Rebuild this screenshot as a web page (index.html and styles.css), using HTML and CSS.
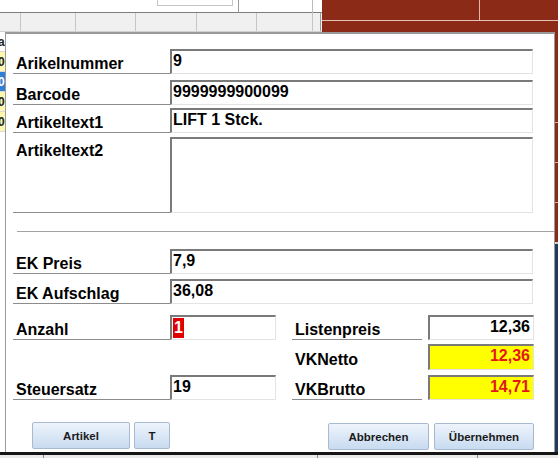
FILE: index.html
```html
<!DOCTYPE html>
<html>
<head>
<meta charset="utf-8">
<link rel="stylesheet" href="styles.css">
</head>
<body>
<div class="app">
  <div class="main">
    <div class="leftpane">
      <div class="topbar"><span class="tbbox"></span><span class="tbbox2"></span></div>
      <div class="header">
        <span class="hc hc1"></span><span class="hc hc2"></span><span class="hc hc3"></span><span class="hc hc4"></span><span class="hc hc5"></span><span class="hc hc6"></span><span class="hc hc7"></span>
      </div>
      <div class="list">
        <div class="li">a</div>
        <div class="li yel">0</div>
        <div class="li sel">0</div>
        <div class="li yel">0</div>
        <div class="li yel">0</div>
      </div>
    </div>
    <div class="rightpane">
      <div class="red">
        <div class="rtop"><span class="rcell"></span></div>
        <div class="rgap"></div>
        <div class="rrow"></div>
        <div class="rrow"></div>
        <div class="rrow"></div>
      </div>
      <div class="blue"></div>
    </div>
  </div>
  <div class="blackline"></div>
  <div class="footer"><span class="fc fc1"></span><span class="fc fc2"></span><span class="fc fc3"></span></div>

  <div class="dialog">
    <div class="field r1">
      <div class="lbl">Arikelnummer</div>
      <div class="inp wide">9</div>
    </div>
    <div class="field r2">
      <div class="lbl">Barcode</div>
      <div class="inp wide">9999999900099</div>
    </div>
    <div class="field r3">
      <div class="lbl">Artikeltext1</div>
      <div class="inp wide">LIFT 1 Stck.</div>
    </div>
    <div class="field r4 tall">
      <div class="lbl top">Artikeltext2</div>
      <div class="inp wide"></div>
    </div>
    <div class="sep"></div>
    <div class="field r5">
      <div class="lbl">EK Preis</div>
      <div class="inp wide">7,9</div>
    </div>
    <div class="field r6">
      <div class="lbl">EK Aufschlag</div>
      <div class="inp wide">36,08</div>
    </div>
    <div class="field r7">
      <div class="lbl">Anzahl</div>
      <div class="inp narrow"><span class="selected">1</span></div>
      <div class="rlbl">Listenpreis</div>
      <div class="inp val">12,36</div>
    </div>
    <div class="field r8">
      <div class="spacer-left"></div>
      <div class="rlbl noline">VKNetto</div>
      <div class="inp val yellow">12,36</div>
    </div>
    <div class="field r9">
      <div class="lbl">Steuersatz</div>
      <div class="inp narrow">19</div>
      <div class="rlbl">VKBrutto</div>
      <div class="inp val yellow">14,71</div>
    </div>
    <div class="buttons">
      <button class="btn b-artikel">Artikel</button>
      <button class="btn b-t">T</button>
      <span class="grow"></span>
      <button class="btn b-abbr">Abbrechen</button>
      <button class="btn b-ueb">Übernehmen</button>
    </div>
  </div>
</div>
</body>
</html>
```
FILE: styles.css
```css
* { box-sizing: border-box; }
html, body { margin: 0; padding: 0; }
body { font-family: "Liberation Sans", Arial, sans-serif; background: #fff; }

.app {
  position: relative;
  width: 558px;
  height: 458px;
  overflow: hidden;
  display: grid;
  grid-template-rows: 452px 3px 3px;
}

.main { display: grid; grid-template-columns: 322px 1fr; }

.leftpane { background: #fff; display: flex; flex-direction: column; }
.topbar {
  height: 13px;
  border-bottom: 1px solid #7d7d7d;
  display: flex;
  background: #fff;
}
.tbbox { margin-left: 157px; width: 76px; height: 6px; border: 1px solid #c4c4c4; border-top: none; }
.tbbox2 { margin-left: 5px; width: 75px; height: 13px; border-left: 1px solid #9a9a9a; border-right: 1px solid #bbb; }
.header {
  height: 19px;
  background: #f0f0f0;
  display: flex;
  border-bottom: 1px solid #d0d0d0;
}
.hc { height: 100%; border-right: 1px solid #c6c6c6; }
.hc1 { width: 21px; }
.hc2 { width: 55px; }
.hc3 { width: 60px; }
.hc4 { width: 61px; }
.hc5 { width: 60px; }
.hc6 { width: 56px; }
.hc7 { width: 8px; border-right: 1px solid #9a9a9a; }

.list { display: flex; flex-direction: column; }
.li {
  height: 20px;
  width: 40px;
  font: bold 12px/20px "Liberation Sans", Arial, sans-serif;
  color: #222;
  padding-left: 0;
  text-indent: -2px;
  border-bottom: 1px solid #d8d8d8;
}
.li.yel { background: #fdf7b0; }
.li.sel { background: #2f7fd6; color: #fff; }

.rightpane { display: grid; grid-template-rows: 242px 1fr; }
.red { background: #8b2a17; display: flex; flex-direction: column; }
.rtop { height: 21px; border-bottom: 1px solid #e6c3b8; display: flex; }
.rcell { width: 158px; height: 100%; border-right: 1px solid #e0b7aa; }
.rgap { height: 101px; }
.rrow { height: 40px; border-top: 1px solid #d9a999; }
.blue { background: #1f3b5d; border-top: 2px solid #c9d3de; }

.blackline { background: #151515; }
.footer { background: #e9e9e9; display: flex; }
.fc { height: 100%; border-right: 1px solid #8a8a8a; }
.fc1 { width: 44px; }
.fc2 { width: 274px; }
.fc3 { width: 160px; }

/* Dialog window */
.dialog {
  position: absolute;
  left: 5px;
  top: 32px;
  width: 550px;
  height: 420px;
  background: #fff;
  border: 1px solid #9a9a9a;
  border-top: 2px solid #9a9a9a;
  border-bottom: none;
  padding: 15px 0 0 7px;
  display: flex;
  flex-direction: column;
}

.field { display: flex; height: 25px; flex: none; }
.r2 { margin-top: 6px; }
.r3 { margin-top: 3px; }
.r4 { margin-top: 4px; }
.tall { height: 76px; }
.r5 { margin-top: 17px; }
.r6 { margin-top: 5px; }
.r7 { margin-top: 11px; }
.r8 { margin-top: 4px; height: 26px; }
.r9 { margin-top: 5px; }

.lbl {
  width: 157px;
  border-bottom: 1px solid #8c8c8c;
  padding-left: 3px;
  display: flex;
  align-items: flex-end;
  font: bold 16px/18px "Liberation Sans", Arial, sans-serif;
  color: #000;
}
.lbl.top { align-items: flex-start; padding-top: 5px; }

.inp {
  border-top: 2px solid #7a7a7a;
  border-left: 2px solid #7a7a7a;
  border-right: 1px solid #e3e3e3;
  border-bottom: 1px solid #e3e3e3;
  padding-left: 1px;
  padding-top: 1px;
  font: bold 16px/18px "Liberation Sans", Arial, sans-serif;
  color: #000;
  background: #fff;
}
.wide { width: 363px; }
.narrow { width: 106px; }

.selected {
  display: inline-block;
  background: #e10000;
  color: #fff;
  line-height: 20px;
  height: 20px;
  padding: 0 1px;
  vertical-align: top;
  margin-top: 0;
}

.spacer-left { width: 263px; }
.rlbl {
  width: 130px;
  margin-left: 16px;
  margin-right: 6px;
  border-bottom: 1px solid #8c8c8c;
  padding-left: 3px;
  display: flex;
  align-items: flex-end;
  font: bold 16px/18px "Liberation Sans", Arial, sans-serif;
  color: #000;
}
.rlbl.noline { border-bottom-color: transparent; }
.val {
  width: 106px;
  text-align: right;
  padding-right: 3px;
  padding-left: 0;
}
.yellow { background: #ffff00; color: #e4161a; }

.sep {
  height: 1px;
  background: #a3a3a3;
  margin: 18px 0 0 4px;
  flex: none;
}

.buttons {
  display: flex;
  margin-top: 22px;
  padding-left: 19px;
  padding-right: 20px;
  height: 27px;
}
.grow { flex: 1; }
.btn {
  height: 27px;
  border: 1px solid #a8bad0;
  border-radius: 2px;
  background: linear-gradient(#eef4fc, #c8dbf0);
  font: bold 11.5px "Liberation Sans", Arial, sans-serif;
  color: #1b1b1b;
  padding: 0;
  margin: 0;
}
.b-artikel { width: 98px; }
.b-t { width: 36px; margin-left: 4px; }
.b-abbr { width: 101px; margin-top: 1px; }
.b-ueb { width: 100px; margin-left: 5px; margin-top: 1px; }
```
